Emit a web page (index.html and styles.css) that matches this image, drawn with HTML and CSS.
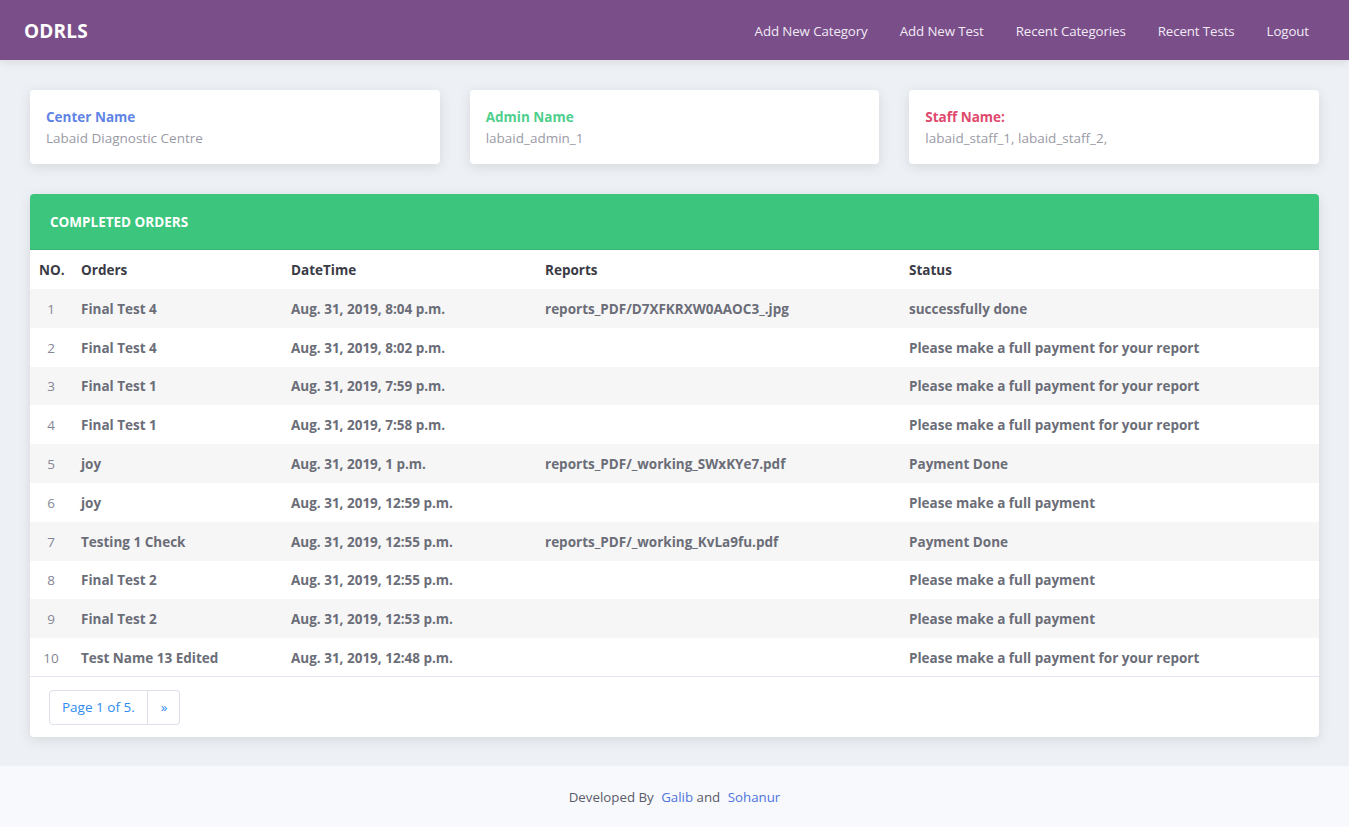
FILE: index.html
```html
<!DOCTYPE html>
<html lang="en">
<head>
<meta charset="utf-8">
<title>ODRLS</title>
<link rel="stylesheet" href="styles.css">
</head>
<body>
<nav class="navbar">
  <a class="brand" href="#">ODRLS</a>
  <ul class="nav-links">
    <li><a href="#">Add New Category</a></li>
    <li><a href="#">Add New Test</a></li>
    <li><a href="#">Recent Categories</a></li>
    <li><a href="#">Recent Tests</a></li>
    <li><a href="#">Logout</a></li>
  </ul>
</nav>
<main class="content">
  <section class="info-row">
    <div class="info-card">
      <div class="info-title title-blue">Center Name</div>
      <div class="info-value">Labaid Diagnostic Centre</div>
    </div>
    <div class="info-card">
      <div class="info-title title-green">Admin Name</div>
      <div class="info-value">labaid_admin_1</div>
    </div>
    <div class="info-card">
      <div class="info-title title-red">Staff Name:</div>
      <div class="info-value">labaid_staff_1, labaid_staff_2,</div>
    </div>
  </section>
  <section class="orders-card">
    <div class="orders-header">COMPLETED ORDERS</div>
    <table class="orders-table">
      <colgroup>
        <col class="c-no"><col class="c-order"><col class="c-date"><col class="c-report"><col class="c-status">
      </colgroup>
      <thead>
        <tr><th>NO.</th><th>Orders</th><th>DateTime</th><th>Reports</th><th>Status</th></tr>
      </thead>
      <tbody>
        <tr><td class="num">1</td><td>Final Test 4</td><td>Aug. 31, 2019, 8:04 p.m.</td><td>reports_PDF/D7XFKRXW0AAOC3_.jpg</td><td>successfully done</td></tr>
        <tr><td class="num">2</td><td>Final Test 4</td><td>Aug. 31, 2019, 8:02 p.m.</td><td></td><td>Please make a full payment for your report</td></tr>
        <tr><td class="num">3</td><td>Final Test 1</td><td>Aug. 31, 2019, 7:59 p.m.</td><td></td><td>Please make a full payment for your report</td></tr>
        <tr><td class="num">4</td><td>Final Test 1</td><td>Aug. 31, 2019, 7:58 p.m.</td><td></td><td>Please make a full payment for your report</td></tr>
        <tr><td class="num">5</td><td>joy</td><td>Aug. 31, 2019, 1 p.m.</td><td>reports_PDF/_working_SWxKYe7.pdf</td><td>Payment Done</td></tr>
        <tr><td class="num">6</td><td>joy</td><td>Aug. 31, 2019, 12:59 p.m.</td><td></td><td>Please make a full payment</td></tr>
        <tr><td class="num">7</td><td>Testing 1 Check</td><td>Aug. 31, 2019, 12:55 p.m.</td><td>reports_PDF/_working_KvLa9fu.pdf</td><td>Payment Done</td></tr>
        <tr><td class="num">8</td><td>Final Test 2</td><td>Aug. 31, 2019, 12:55 p.m.</td><td></td><td>Please make a full payment</td></tr>
        <tr><td class="num">9</td><td>Final Test 2</td><td>Aug. 31, 2019, 12:53 p.m.</td><td></td><td>Please make a full payment</td></tr>
        <tr><td class="num">10</td><td>Test Name 13 Edited</td><td>Aug. 31, 2019, 12:48 p.m.</td><td></td><td>Please make a full payment for your report</td></tr>
      </tbody>
    </table>
    <div class="pager-wrap">
      <ul class="pager">
        <li><a href="#">Page 1 of 5.</a></li>
        <li><a href="#">&raquo;</a></li>
      </ul>
    </div>
  </section>
</main>
<footer class="footer">
  <p class="footer-text">Developed By <a href="#">Galib</a> and <a href="#">Sohanur</a></p>
</footer>
</body>
</html>
```
FILE: styles.css
```css
* { box-sizing: border-box; }
html, body { margin: 0; padding: 0; }
body {
  font-family: "Open Sans", "Noto Sans", sans-serif;
  font-size: 14px;
  background: #edf0f4;
  color: #858796;
}
a { text-decoration: none; }
.navbar {
  height: 60px;
  background: #7a4e89;
  display: flex;
  align-items: center;
  justify-content: space-between;
  padding: 2px 24px 0;
  box-shadow: 0 2px 8px rgba(58,59,69,0.12);
}
.brand {
  color: #fff;
  font-weight: 700;
  font-size: 19px;
  letter-spacing: 0.2px;
}
.nav-links {
  list-style: none;
  display: flex;
  margin: 0;
  padding: 0;
}
.nav-links a {
  display: block;
  padding: 0 16px;
  color: #f1eaf5;
  font-size: 13.3px;
  letter-spacing: -0.1px;
}
.content {
  padding: 30px 30px 29px;
}
.info-row {
  display: grid;
  grid-template-columns: 1fr 1fr 1fr;
  gap: 30px;
}
.info-card {
  background: #fff;
  border-radius: 4px;
  height: 74px;
  padding: 18px 16px 0;
  box-shadow: 0 3px 12px rgba(58,59,69,0.13);
}
.info-title {
  font-weight: 700;
  font-size: 13.5px;
  line-height: 18px;
}
.title-blue { color: #5f84e5; }
.title-green { color: #4fcf8c; }
.title-red { color: #e0486d; }
.info-value {
  margin-top: 3px;
  font-size: 13.5px;
  color: #9a9aa6;
  line-height: 18px;
}
.orders-card {
  margin-top: 30px;
  background: #fff;
  border-radius: 4px;
  overflow: hidden;
  box-shadow: 0 3px 12px rgba(58,59,69,0.13);
}
.orders-header {
  height: 56px;
  background: #3cc57d;
  color: #fff;
  font-weight: 700;
  font-size: 13.5px;
  padding: 0 20px;
  display: flex;
  align-items: center;
  border-bottom: 1px solid #37b572;
}
.orders-table {
  width: 100%;
  border-collapse: collapse;
  table-layout: fixed;
}
.c-no { width: 42px; }
.c-order { width: 210px; }
.c-date { width: 254px; }
.c-report { width: 364px; }
.orders-table th {
  text-align: left;
  color: #3a3b45;
  font-weight: 700;
  font-size: 13.5px;
  height: 39px;
  padding: 0 9px;
}
.orders-table td {
  height: 38.8px;
  padding: 1px 9px 0;
  font-weight: 700;
  font-size: 13.5px;
  color: #6b6d78;
  white-space: nowrap;
}
.orders-table td.num {
  font-weight: 400;
  color: #858796;
  text-align: center;
  padding: 1px 0 0 0;
}
.orders-table tbody tr:nth-child(odd) { background: #f6f6f6; }
.orders-table tbody tr:last-child { border-bottom: 1px solid #e3e6f0; }
.pager-wrap {
  padding: 13px 19px 12px;
}
.pager {
  list-style: none;
  display: flex;
  margin: 0;
  padding: 0;
}
.pager a {
  display: block;
  height: 35px;
  line-height: 33px;
  padding: 0 12px;
  border: 1px solid #dddfeb;
  color: #2f8bf0;
  font-size: 13.5px;
}
.pager li:first-child a { border-radius: 4px 0 0 4px; }
.pager li:last-child a { border-radius: 0 4px 4px 0; border-left: 0; padding: 0 12px 0 13px; }
.footer {
  height: 61px;
  background: #f8f9fc;
  display: flex;
  align-items: center;
  justify-content: center;
}
.footer-text {
  margin: 0;
  color: #5a5c69;
  font-size: 13.3px;
}
.footer-text a { color: #4e73df; margin-left: 4px; }
```
